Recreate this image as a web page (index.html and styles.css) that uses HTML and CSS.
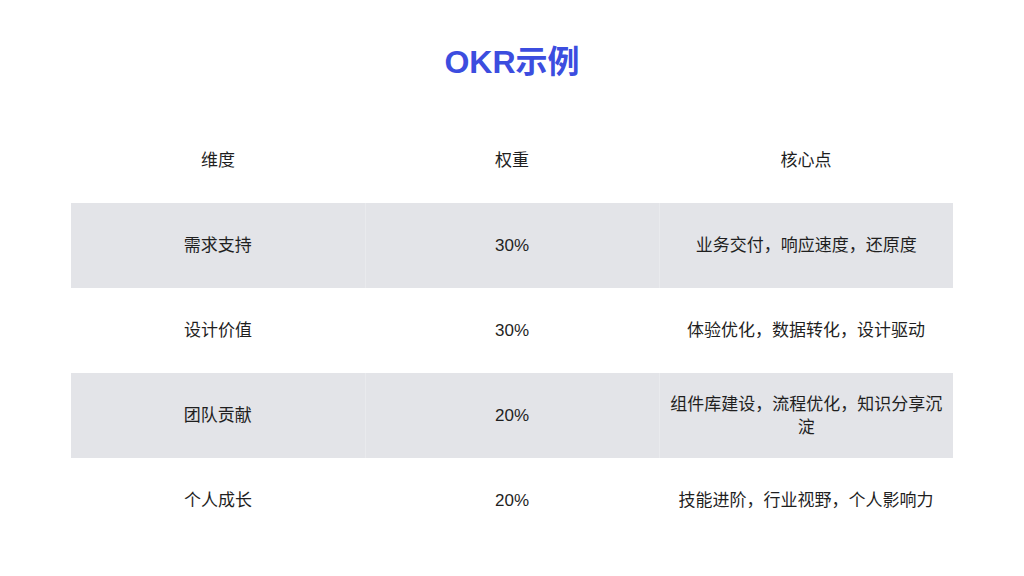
FILE: index.html
```html
<!DOCTYPE html>
<html lang="zh">
<head>
<meta charset="utf-8">
<link rel="stylesheet" href="styles.css">
</head>
<body>
<div class="page">
  <h1 class="title">OKR示例</h1>
  <table class="okr">
    <thead>
      <tr><th>维度</th><th>权重</th><th>核心点</th></tr>
    </thead>
    <tbody>
      <tr class="shade"><td>需求支持</td><td>30%</td><td>业务交付，响应速度，还原度</td></tr>
      <tr><td>设计价值</td><td>30%</td><td>体验优化，数据转化，设计驱动</td></tr>
      <tr class="shade"><td>团队贡献</td><td>20%</td><td>组件库建设，流程优化，知识分享沉淀</td></tr>
      <tr><td>个人成长</td><td>20%</td><td>技能进阶，行业视野，个人影响力</td></tr>
    </tbody>
  </table>
</div>
</body>
</html>
```
FILE: styles.css
```css
html, body {
  margin: 0;
  padding: 0;
  background: #ffffff;
}
.page {
  width: 1024px;
  height: 576px;
  display: flex;
  flex-direction: column;
  align-items: center;
  font-family: "Liberation Sans", "Noto Sans CJK SC", sans-serif;
  color: #1f1f1f;
}
.title {
  margin: 0;
  height: 118px;
  box-sizing: border-box;
  padding-top: 43px;
  font-size: 32px;
  line-height: 38px;
  font-weight: bold;
  color: #3c4ddf;
}
.okr {
  width: 882px;
  border-collapse: collapse;
  table-layout: fixed;
  font-size: 17px;
  line-height: 23px;
}
.okr th, .okr td {
  width: 294px;
  height: 85px;
  padding: 0 10px;
  box-sizing: border-box;
  text-align: center;
  vertical-align: middle;
  font-weight: normal;
}
.okr tr.shade td {
  background: #e3e4e8;
}
.okr tr.shade td + td {
  border-left: 1px solid #e9eaed;
}
```
